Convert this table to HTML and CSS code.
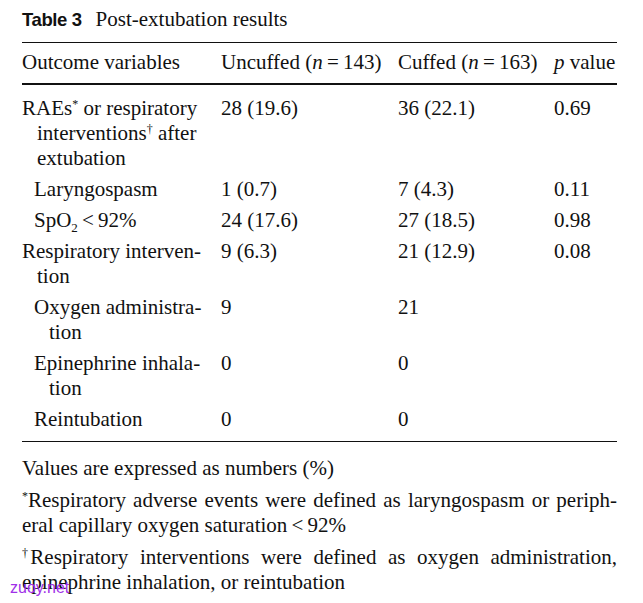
FILE: index.html
```html
<!DOCTYPE html>
<html>
<head>
<meta charset="utf-8">
<link rel="stylesheet" href="styles.css">
</head>
<body>
<div class="page">
  <div class="caption"><span class="label">Table 3</span><span class="ctitle">Post-extubation results</span></div>
  <table class="results">
    <colgroup>
      <col class="c1"><col class="c2"><col class="c3"><col class="c4">
    </colgroup>
    <thead>
      <tr>
        <th>Outcome variables</th>
        <th>Uncuffed (<i>n</i>&#8201;=&#8201;143)</th>
        <th>Cuffed (<i>n</i>&#8201;=&#8201;163)</th>
        <th><i>p</i> value</th>
      </tr>
    </thead>
    <tbody>
      <tr class="first">
        <td><div class="hang">RAEs<sup>*</sup> or respiratory<br>interventions<sup>†</sup> after<br>extubation</div></td>
        <td>28 (19.6)</td><td>36 (22.1)</td><td>0.69</td>
      </tr>
      <tr>
        <td><div class="hang sub">Laryngospasm</div></td>
        <td>1 (0.7)</td><td>7 (4.3)</td><td>0.11</td>
      </tr>
      <tr>
        <td><div class="hang sub">SpO<sub>2</sub>&#8201;&lt;&#8201;92%</div></td>
        <td>24 (17.6)</td><td>27 (18.5)</td><td>0.98</td>
      </tr>
      <tr>
        <td><div class="hang">Respiratory interven-<br>tion</div></td>
        <td>9 (6.3)</td><td>21 (12.9)</td><td>0.08</td>
      </tr>
      <tr>
        <td><div class="hang sub">Oxygen administra-<br>tion</div></td>
        <td>9</td><td>21</td><td></td>
      </tr>
      <tr>
        <td><div class="hang sub">Epinephrine inhala-<br>tion</div></td>
        <td>0</td><td>0</td><td></td>
      </tr>
      <tr class="last">
        <td><div class="hang sub">Reintubation</div></td>
        <td>0</td><td>0</td><td></td>
      </tr>
    </tbody>
  </table>
  <div class="notes">
    <p class="note">Values are expressed as numbers (%)</p>
    <div class="note">
      <div class="jline"><sup>*</sup>Respiratory adverse events were defined as laryngospasm or periph-</div>
      <div class="line">eral capillary oxygen saturation&#8201;&lt;&#8201;92%</div>
    </div>
    <div class="note">
      <div class="jline"><span class="nb"><sup class="dag">†</sup>Respiratory</span> interventions were defined as oxygen administration,</div>
      <div class="line">epinephrine inhalation, or reintubation</div>
    </div>
  </div>
  <div class="watermark">zuoy.net</div>
</div>
</body>
</html>
```

FILE: styles.css
```css
html, body {
  margin: 0;
  padding: 0;
  background: #ffffff;
}

.page {
  position: relative;
  width: 595px;
  padding: 6px 26px 0 22px;
  font-family: "Liberation Serif", "Times New Roman", serif;
  font-size: 21px;
  line-height: 25px;
  color: #111111;
}

.caption {
  height: 26px;
  line-height: 26px;
  margin-bottom: 10px;
  white-space: nowrap;
}

.label {
  font-family: "Liberation Sans", Arial, sans-serif;
  font-weight: bold;
  font-size: 18.5px;
  letter-spacing: -0.4px;
  margin-right: 14px;
}

.ctitle {
  font-size: 21px;
}

.results {
  width: 595px;
  border-collapse: collapse;
  table-layout: fixed;
}

.c1 { width: 199px; }
.c2 { width: 177px; }
.c3 { width: 156px; }
.c4 { width: 63px; }

.results th {
  font-weight: normal;
  text-align: left;
  white-space: nowrap;
  padding: 7px 0 8px 0;
  border-top: 1px solid #111111;
  border-bottom: 2px solid #111111;
}

.results td {
  vertical-align: top;
  padding: 3px 0 3px 0;
  text-align: left;
  white-space: nowrap;
}

.results tr.first td { padding-top: 11px; }
.results tr.last td { padding-bottom: 9px; border-bottom: 1.5px solid #111111; }

.hang {
  white-space: nowrap;
  padding-left: 15px;
  text-indent: -15px;
}

.hang.sub {
  margin-left: 12px;
}

sup {
  font-size: 12px;
  line-height: 0;
  vertical-align: 7px;
}

sub {
  font-size: 13px;
  line-height: 0;
  vertical-align: -5px;
}

.notes {
  padding-top: 14px;
}

.note {
  margin: 0 0 7px 0;
}

.jline {
  text-align: justify;
  text-align-last: justify;
  text-justify: inter-word;
}

.nb {
  white-space: nowrap;
}

.dag {
  margin-right: -4px;
}

.line {
  text-align: left;
}

.watermark {
  position: absolute;
  left: 10px;
  top: 578px;
  font-family: "Liberation Sans", Arial, sans-serif;
  font-size: 16px;
  line-height: 20px;
  color: #a030e8;
}
```
